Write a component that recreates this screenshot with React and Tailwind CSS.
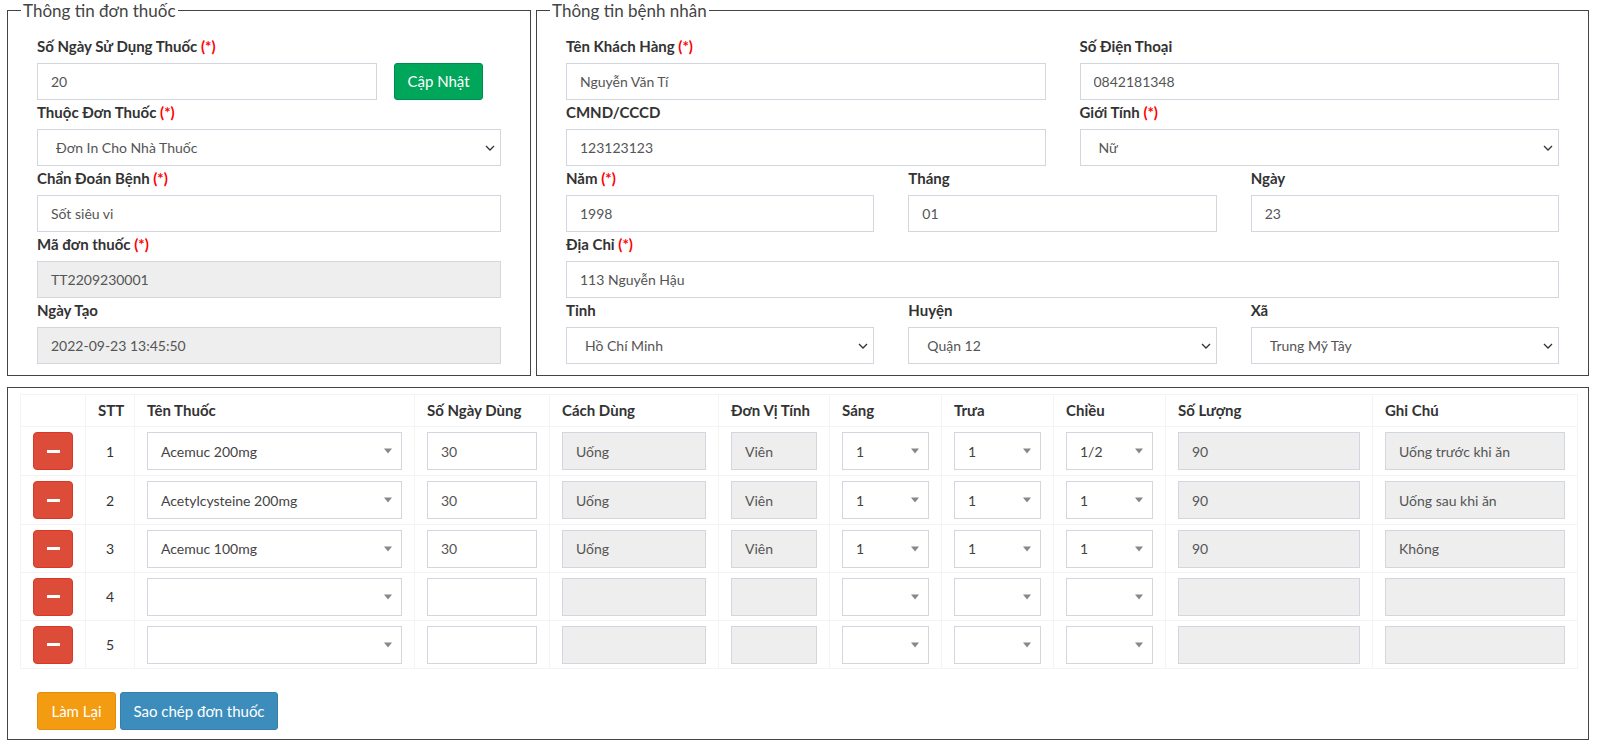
import React from 'react'

const rows = [
  { n: 1, name: 'Acemuc 200mg', days: '30', use: 'Uống', unit: 'Viên', s: '1', t: '1', c: '1/2', qty: '90', note: 'Uống trước khi ăn' },
  { n: 2, name: 'Acetylcysteine 200mg', days: '30', use: 'Uống', unit: 'Viên', s: '1', t: '1', c: '1', qty: '90', note: 'Uống sau khi ăn' },
  { n: 3, name: 'Acemuc 100mg', days: '30', use: 'Uống', unit: 'Viên', s: '1', t: '1', c: '1', qty: '90', note: 'Không' },
  { n: 4 },
  { n: 5 },
]

function Label({ text, req }) {
  return (
    <label className="block h-[21px] mb-[6px] text-[15px] leading-[21px] font-bold text-[#333] whitespace-nowrap">
      {text}
      {req && <span className="text-[#ff0000]"> (*)</span>}
    </label>
  )
}

function TextInput({ value, disabled }) {
  return (
    <input
      readOnly
      value={value}
      className={`block w-full h-[37px] border border-[#d2d6de] px-[13px] text-[14px] text-[#555] outline-none ${disabled ? 'bg-[#eee]' : 'bg-white'}`}
    />
  )
}

function Select({ value }) {
  return (
    <div className="relative">
      <select
        value={value}
        onChange={() => {}}
        className="block w-full h-[37px] appearance-none border border-[#d2d6de] bg-white pl-[18px] text-[14px] text-[#555] outline-none"
      >
        <option>{value}</option>
      </select>
      <svg className="absolute right-[6px] top-1/2 -translate-y-1/2 pointer-events-none" width="10" height="6" viewBox="0 0 10 6">
        <path d="M1 1l4 4 4-4" fill="none" stroke="#333" strokeWidth="1.3" />
      </svg>
    </div>
  )
}

function Field({ label, req, children }) {
  return (
    <div>
      <Label text={label} req={req} />
      {children}
    </div>
  )
}

// select2-looking box used in the table
function Pick({ value }) {
  return (
    <div className="relative h-[38px] border border-[#d2d6de] bg-white flex items-center pl-[13px] text-[14px] text-[#444]">
      <span>{value}</span>
      <span className="absolute right-[9px] top-1/2 -translate-y-1/2 w-0 h-0 border-x-[4px] border-x-transparent border-t-[5px] border-t-[#888]" />
    </div>
  )
}

function Cell({ value, disabled }) {
  return (
    <input
      readOnly
      value={value || ''}
      className={`block w-full h-[38px] border border-[#d2d6de] px-[13px] text-[14px] text-[#555] outline-none ${disabled ? 'bg-[#eee]' : 'bg-white'}`}
    />
  )
}

export default function App() {
  const td = 'border border-[#f4f4f4] px-3 align-middle'
  const th = 'border border-[#f4f4f4] px-3 align-middle text-left font-bold text-[15px] text-[#333]'

  return (
    <div className="font-['Lato','Noto_Sans',sans-serif] bg-white text-[#333] w-[1600px] h-[745px] overflow-hidden">
      {/* top forms */}
      <div className="flex pl-[7px] gap-[5px]">
        <fieldset className="w-[524px] min-w-0 border border-[#444] px-[13px] pb-[11px]">
          <legend className="px-[2px] text-[17px] leading-[21px] text-[#444]">Thông tin đơn thuốc</legend>
          <div className="px-4 pt-[15px] flex flex-col gap-[2px]">
            <Field label="Số Ngày Sử Dụng Thuốc" req>
              <div className="flex gap-[17px]">
                <div className="w-[340px]">
                  <TextInput value="20" />
                </div>
                <button className="w-[89px] h-[37px] rounded-[3px] bg-[#00a65a] border border-[#008d4c] text-white text-[15px]">
                  Cập Nhật
                </button>
              </div>
            </Field>
            <Field label="Thuộc Đơn Thuốc" req>
              <Select value="Đơn In Cho Nhà Thuốc" />
            </Field>
            <Field label="Chẩn Đoán Bệnh" req>
              <TextInput value="Sốt siêu vi" />
            </Field>
            <Field label="Mã đơn thuốc" req>
              <TextInput value="TT2209230001" disabled />
            </Field>
            <Field label="Ngày Tạo">
              <TextInput value="2022-09-23 13:45:50" disabled />
            </Field>
          </div>
        </fieldset>

        <fieldset className="w-[1053px] min-w-0 border border-[#444] px-[13px] pb-[11px]">
          <legend className="px-[2px] text-[17px] leading-[21px] text-[#444]">Thông tin bệnh nhân</legend>
          <div className="px-4 pt-[15px] flex flex-col gap-[2px]">
            <div className="grid grid-cols-2 gap-x-[34px]">
              <Field label="Tên Khách Hàng" req>
                <TextInput value="Nguyễn Văn Tí" />
              </Field>
              <Field label="Số Điện Thoại">
                <TextInput value="0842181348" />
              </Field>
            </div>
            <div className="grid grid-cols-2 gap-x-[34px]">
              <Field label="CMND/CCCD">
                <TextInput value="123123123" />
              </Field>
              <Field label="Giới Tính" req>
                <Select value="Nữ" />
              </Field>
            </div>
            <div className="grid grid-cols-3 gap-x-[34px]">
              <Field label="Năm" req>
                <TextInput value="1998" />
              </Field>
              <Field label="Tháng">
                <TextInput value="01" />
              </Field>
              <Field label="Ngày">
                <TextInput value="23" />
              </Field>
            </div>
            <Field label="Địa Chỉ" req>
              <TextInput value="113 Nguyễn Hậu" />
            </Field>
            <div className="grid grid-cols-3 gap-x-[34px]">
              <Field label="Tỉnh">
                <Select value="Hồ Chí Minh" />
              </Field>
              <Field label="Huyện">
                <Select value="Quận 12" />
              </Field>
              <Field label="Xã">
                <Select value="Trung Mỹ Tây" />
              </Field>
            </div>
          </div>
        </fieldset>
      </div>

      {/* medicine table */}
      <div className="ml-[7px] mt-[11px] w-[1582px] h-[353px] border border-[#444] pl-3 pt-[6px]">
        <table className="table-fixed border-collapse w-[1557px]">
          <colgroup>
            <col className="w-[65px]" />
            <col className="w-[49px]" />
            <col className="w-[280px]" />
            <col className="w-[135px]" />
            <col className="w-[169px]" />
            <col className="w-[111px]" />
            <col className="w-[112px]" />
            <col className="w-[112px]" />
            <col className="w-[112px]" />
            <col className="w-[207px]" />
            <col className="w-[205px]" />
          </colgroup>
          <thead>
            <tr className="h-[32px]">
              <th className={th}></th>
              <th className={th}>STT</th>
              <th className={th}>Tên Thuốc</th>
              <th className={th}>Số Ngày Dùng</th>
              <th className={th}>Cách Dùng</th>
              <th className={th}>Đơn Vị Tính</th>
              <th className={th}>Sáng</th>
              <th className={th}>Trưa</th>
              <th className={th}>Chiều</th>
              <th className={th}>Số Lượng</th>
              <th className={th}>Ghi Chú</th>
            </tr>
          </thead>
          <tbody>
            {rows.map(r => (
              <tr key={r.n} className={r.n < 3 ? 'h-[49px]' : 'h-[48px]'}>
                <td className={td}>
                  <button className="w-full h-[38px] rounded-[4px] bg-[#dd4b39] border border-[#d73925] flex items-center justify-center">
                    <span className="block w-[13px] h-[3px] bg-white" />
                  </button>
                </td>
                <td className={`${td} text-center text-[14px] text-[#333]`}>{r.n}</td>
                <td className={td}><Pick value={r.name} /></td>
                <td className={td}><Cell value={r.days} /></td>
                <td className={td}><Cell value={r.use} disabled /></td>
                <td className={td}><Cell value={r.unit} disabled /></td>
                <td className={td}><Pick value={r.s} /></td>
                <td className={td}><Pick value={r.t} /></td>
                <td className={td}><Pick value={r.c} /></td>
                <td className={td}><Cell value={r.qty} disabled /></td>
                <td className={td}><Cell value={r.note} disabled /></td>
              </tr>
            ))}
          </tbody>
        </table>

        <div className="flex gap-[4px] pl-[17px] mt-[23px]">
          <button className="w-[79px] h-[38px] rounded-[3px] bg-[#f39c12] border border-[#e08e0b] text-white text-[15px]">
            Làm Lại
          </button>
          <button className="w-[158px] h-[38px] rounded-[3px] bg-[#3c8dbc] border border-[#367fa9] text-white text-[15px]">
            Sao chép đơn thuốc
          </button>
        </div>
      </div>
    </div>
  )
}
